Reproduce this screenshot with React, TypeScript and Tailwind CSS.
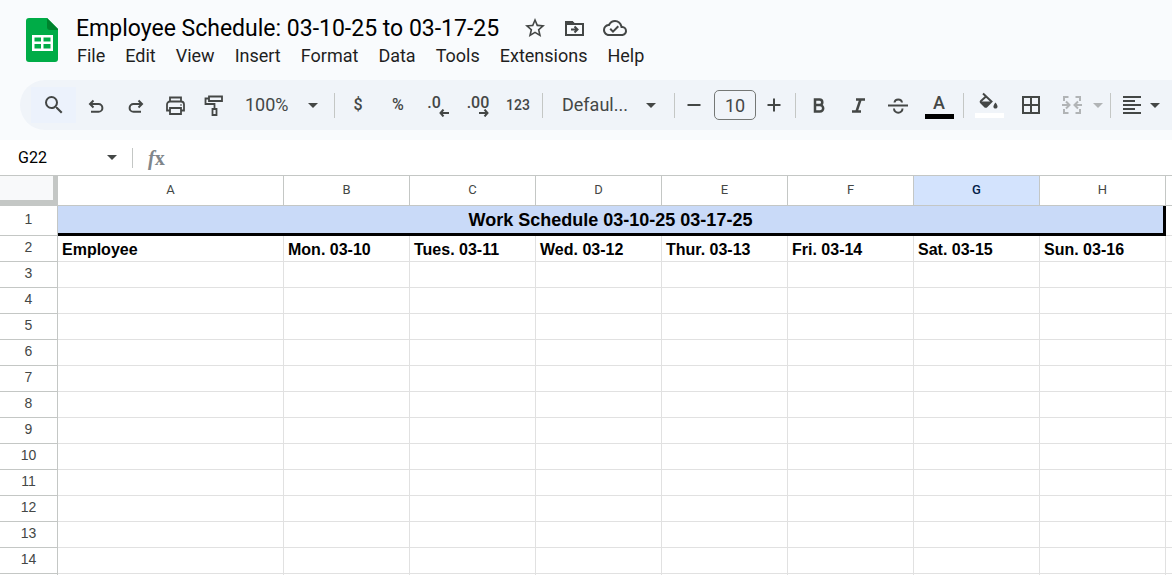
import React from "react";
import {
  MdBorderAll,
  MdFormatAlignLeft,
  MdOutlineCloudDone,
  MdSearch,
  MdStarOutline,
} from "react-icons/md";

const MENUS = ["File", "Edit", "View", "Insert", "Format", "Data", "Tools", "Extensions", "Help"];
const COLUMNS = ["A", "B", "C", "D", "E", "F", "G", "H"];
const SELECTED_COLUMN = "G";
const HEADINGS = [
  "Employee",
  "Mon. 03-10",
  "Tues. 03-11",
  "Wed. 03-12",
  "Thur. 03-13",
  "Fri. 03-14",
  "Sat. 03-15",
  "Sun. 03-16",
];
const EMPTY_ROWS = Array.from({ length: 12 }, (_, i) => i + 3);

function Caret({ className = "" }: { className?: string }) {
  return (
    <svg viewBox="0 0 10 5" className={`h-[5px] w-[10px] shrink-0 fill-current ${className}`} aria-hidden="true">
      <path d="M0 0h10L5 5z" />
    </svg>
  );
}

function Divider() {
  return <div className="ml-1 mr-[3px] h-[25px] w-px shrink-0 bg-[#c4c7c5]" />;
}

function Tool({ label, children }: { label: string; children: React.ReactNode }) {
  return (
    <button type="button" aria-label={label} className="flex h-9 w-10 shrink-0 items-center justify-center">
      {children}
    </button>
  );
}

function Stroke({ children, className = "stroke-2" }: { children: React.ReactNode; className?: string }) {
  return (
    <svg viewBox="0 0 24 24" className={`h-6 w-6 shrink-0 fill-none stroke-current ${className}`} aria-hidden="true">
      {children}
    </svg>
  );
}

function SheetsLogo() {
  return (
    <svg viewBox="0 0 32 44" className="h-11 w-8 shrink-0" aria-hidden="true">
      <path d="M3 0h18l11 11v30a3 3 0 0 1-3 3H3a3 3 0 0 1-3-3V3a3 3 0 0 1 3-3z" fill="#00ac47" />
      <path d="M21 0l11 11v1H24a3 3 0 0 1-3-3z" fill="#00832d" />
      <path
        fillRule="evenodd"
        fill="#fff"
        d="M6 17h21v16H6zM8.500 19.500v4h6.500v-4zM17.500 19.500v4h7v-4zM8.500 26v4.500h6.500V26zM17.500 26v4.500h7V26z"
      />
    </svg>
  );
}

function Toolbar() {
  return (
    <div
      role="toolbar"
      aria-label="Main"
      className="ml-5 flex h-[50px] items-center overflow-hidden rounded-l-full bg-[#f0f4f9] pl-[11px] text-[#444746]"
    >
      <button
        type="button"
        aria-label="Search the menus"
        className="flex h-9 w-[45px] shrink-0 items-center justify-center bg-[#ecf2fc]"
      >
        <MdSearch className="size-6" />
      </button>
      <Tool label="Undo">
        <Stroke>
          <path d="M9.500 7.500L6 11l3.500 3.500M6 11h8.500a3.900 3.900 0 0 1 0 7.800H7" />
        </Stroke>
      </Tool>
      <Tool label="Redo">
        <Stroke>
          <path d="M14.500 7.500L18 11l-3.500 3.500M18 11H9.500a3.900 3.900 0 0 0 0 7.800H17" />
        </Stroke>
      </Tool>
      <Tool label="Print">
        <Stroke className="stroke-[1.800px]">
          <path d="M6 8.500v-4h11v4M6 17.500H3v-6a3 3 0 0 1 3-3h11a3 3 0 0 1 3 3v6h-3M6 15h11v6H6zM16.500 12h1" />
        </Stroke>
      </Tool>
      <Tool label="Paint format">
        <Stroke className="stroke-[1.800px]">
          <path d="M5 3.500h13v4.500H5zM5 5.500H1.500v5.500h9v4.500M8.500 16h4v6h-4z" />
        </Stroke>
      </Tool>
      <div className="relative flex h-9 w-[94px] shrink-0 items-center">
        <select aria-label="Zoom" defaultValue="100%" className="w-full appearance-none bg-transparent pl-[9px] text-lg">
          <option>100%</option>
        </select>
        <Caret className="pointer-events-none absolute right-3" />
      </div>
      <Divider />
      <Tool label="Format as currency">
        <span className="text-base font-medium">$</span>
      </Tool>
      <Tool label="Format as percent">
        <span className="text-base font-medium">%</span>
      </Tool>
      <Tool label="Decrease decimal places">
        <span className="flex flex-col pt-[3px]">
          <span className="pr-2 text-base font-medium leading-3">.0</span>
          <svg viewBox="0 0 10 8" className="h-2 w-[10px] self-end fill-none stroke-current stroke-2" aria-hidden="true">
            <path d="M4.500 .5L1.500 4l3 3.500M1.500 4H10" />
          </svg>
        </span>
      </Tool>
      <Tool label="Increase decimal places">
        <span className="flex flex-col pt-[3px]">
          <span className="text-base font-medium leading-3">.00</span>
          <svg viewBox="0 0 10 8" className="h-2 w-[10px] self-end fill-none stroke-current stroke-2" aria-hidden="true">
            <path d="M5.500 .5L8.500 4l-3 3.500M8.500 4H0" />
          </svg>
        </span>
      </Tool>
      <Tool label="More formats">
        <span className="text-sm font-medium">123</span>
      </Tool>
      <Divider />
      <div className="relative flex h-9 w-[124px] shrink-0 items-center">
        <select aria-label="Font" defaultValue="Defaul..." className="w-full appearance-none bg-transparent pl-4 text-lg">
          <option>Defaul...</option>
        </select>
        <Caret className="pointer-events-none absolute right-[14px]" />
      </div>
      <Divider />
      <button
        type="button"
        aria-label="Decrease font size"
        className="flex h-9 w-8 shrink-0 items-center justify-center"
      >
        <Stroke>
          <path d="M5.500 12h13" />
        </Stroke>
      </button>
      <input
        aria-label="Font size"
        defaultValue="10"
        className="ml-1 h-[30px] w-[42px] shrink-0 rounded-[5px] border border-[#747775] bg-transparent text-center text-lg"
      />
      <button
        type="button"
        aria-label="Increase font size"
        className="flex h-9 w-[35px] shrink-0 items-center justify-center"
      >
        <Stroke>
          <path d="M5.500 12h13M12 5.500v13" />
        </Stroke>
      </button>
      <Divider />
      <Tool label="Bold">
        <Stroke className="stroke-[2.500px]">
          <path d="M8 6.500h4.500a2.800 2.800 0 0 1 0 5.600H8zM8 12.100h5a3.200 3.200 0 0 1 0 6.400H8zM8 6.500v12" />
        </Stroke>
      </Tool>
      <Tool label="Italic">
        <Stroke className="stroke-[2.500px]">
          <path d="M9 6.500h9M5 18.500h9M13.500 6.500l-4 12" />
        </Stroke>
      </Tool>
      <Tool label="Strikethrough">
        <Stroke>
          <path d="M1 12.500h20M7.500 9.500c0.500-4 7-4 7.500 0M7 15.500c0 5.500 8.500 5.500 8.500 0" />
        </Stroke>
      </Tool>
      <Tool label="Text color">
        <span className="flex flex-col items-center gap-[2px] pt-[2px]">
          <span className="text-lg font-medium leading-[18px]">A</span>
          <span className="h-[5px] w-[29px] bg-black" />
        </span>
      </Tool>
      <Divider />
      <button type="button" aria-label="Fill color" className="flex h-9 w-11 shrink-0 items-center justify-center">
        <span className="flex flex-col items-center">
          <svg viewBox="0 0 20 19" className="h-[19px] w-5" aria-hidden="true">
            <path
              d="M4 1.500L12.500 9.500L7.500 14.500a1 1 0 0 1-1.500 0L2 10.500a1 1 0 0 1 0-1.500L7.500 4"
              className="fill-none stroke-current stroke-2"
            />
            <path d="M2 9.500h10.500l-5 5.500h-2zM16.500 10.500c3 3.500 2.500 6 0 6s-3-2.500 0-6z" className="fill-current" />
          </svg>
          <span className="mt-[2px] h-[5px] w-[29px] bg-white" />
        </span>
      </button>
      <Tool label="Borders">
        <MdBorderAll className="size-6" />
      </Tool>
      <button
        type="button"
        aria-label="Merge cells"
        disabled
        className="flex h-9 w-[55px] shrink-0 items-center gap-[9px] pl-[9px] text-[#b1b4b6]"
      >
        <Stroke>
          <path d="M8.500 4H4v4M4 16v4h4.500M15.500 4H20v4M20 16v4h-4.500M2 12h7M6 8.500L9.500 12L6 15.500M22 12h-7M18 8.500L14.500 12l3.500 3.500" />
        </Stroke>
        <Caret />
      </button>
      <Divider />
      <button
        type="button"
        aria-label="Horizontal align"
        className="flex h-9 shrink-0 items-center gap-[6px] pl-[6px]"
      >
        <MdFormatAlignLeft className="size-6" />
        <Caret />
      </button>
    </div>
  );
}

function RowHeader({ n }: { n: number }) {
  return (
    <th
      scope="row"
      className="border-b border-r border-[#c4c7c5] p-0 pb-[3px] text-sm leading-4 font-normal text-[#444746] font-['Liberation_Sans',Arial,sans-serif]"
    >
      {n}
    </th>
  );
}

function Grid() {
  return (
    <table className="w-full table-fixed border-separate border-spacing-0 font-['Liberation_Sans',Arial,sans-serif]">
      <colgroup>
        <col className="w-[58px]" />
        <col className="w-[226px]" />
        {COLUMNS.slice(1).map((c) => (
          <col key={c} className="w-[126px]" />
        ))}
        <col />
      </colgroup>
      <thead>
        <tr className="h-[30px] text-[13px] leading-4 text-[#444746]">
          <td className="border-b-[6px] border-r-[5px] border-[#c4c7c5] bg-[#f8f9fa] p-0" />
          {COLUMNS.map((c) => (
            <th
              key={c}
              scope="col"
              className={
                c === SELECTED_COLUMN
                  ? "border-b border-r border-[#c4c7c5] bg-[#d3e3fd] p-0 pb-px font-medium text-[#041e49] font-['Roboto',sans-serif]"
                  : "border-b border-r border-[#c4c7c5] p-0 pb-px font-normal font-['Roboto',sans-serif]"
              }
            >
              {c}
            </th>
          ))}
          <td className="border-b border-[#c4c7c5] p-0" />
        </tr>
      </thead>
      <tbody>
        <tr className="h-[30px]">
          <RowHeader n={1} />
          <td
            colSpan={8}
            className="border-b-[3px] border-r-[3px] border-black bg-[#c9daf8] p-0 text-center text-lg leading-6 font-bold text-black"
          >
            Work Schedule 03-10-25 03-17-25
          </td>
          <td className="border-b border-[#e1e1e1] p-0" />
        </tr>
        <tr className="h-[26px]">
          <RowHeader n={2} />
          {HEADINGS.map((h) => (
            <td
              key={h}
              className="border-b border-r border-[#e1e1e1] p-0 pl-1 pt-[2px] text-base leading-5 font-bold whitespace-nowrap text-black"
            >
              {h}
            </td>
          ))}
          <td className="border-b border-[#e1e1e1] p-0" />
        </tr>
        {EMPTY_ROWS.map((n) => (
          <tr key={n} className="h-[26px]">
            <RowHeader n={n} />
            {COLUMNS.map((c) => (
              <td key={c} className="border-b border-r border-[#e1e1e1] p-0" />
            ))}
            <td className="border-b border-[#e1e1e1] p-0" />
          </tr>
        ))}
        <tr className="h-[26px]">
          <td className="border-r border-[#c4c7c5] p-0" />
          {COLUMNS.map((c) => (
            <td key={c} className="border-r border-[#e1e1e1] p-0" />
          ))}
          <td className="p-0" />
        </tr>
      </tbody>
    </table>
  );
}

export default function App() {
  return (
    <div className="h-screen overflow-hidden bg-white font-['Roboto',sans-serif] text-[#1f1f1f]">
      <header className="bg-[#f9fbfd] pb-[10px]">
        <div className="flex h-20 gap-[18px] pl-[26px] pt-[14px]">
          <div className="pt-1">
            <SheetsLogo />
          </div>
          <div>
            <div className="flex h-7 items-center text-[#444746]">
              <h1 className="mr-6 pt-[2px] text-[23px] leading-7 whitespace-nowrap text-black">
                Employee Schedule: 03-10-25 to 03-17-25
              </h1>
              <div className="flex gap-4">
                <button type="button" aria-label="Star">
                  <MdStarOutline className="size-6" />
                </button>
                <button type="button" aria-label="Move">
                  <Stroke>
                    <path d="M3 6h6l2 2h9v11H3z" />
                    <path d="M3 6h6l2 2H3z" className="fill-current" />
                    <path d="M8 13.500h6M11.500 10.500l3 3l-3 3" />
                  </Stroke>
                </button>
                <button type="button" aria-label="Document status">
                  <MdOutlineCloudDone className="size-6" />
                </button>
              </div>
            </div>
            <nav aria-label="Menus" className="flex h-7 items-center gap-5 pl-px text-lg">
              {MENUS.map((m) => (
                <button key={m} type="button">
                  {m}
                </button>
              ))}
            </nav>
          </div>
        </div>
        <Toolbar />
      </header>
      <div className="flex h-9 items-center border-b border-[#c4c7c5]">
        <input
          aria-label="Name box"
          defaultValue="G22"
          className="w-[107px] bg-transparent pl-[18px] text-base text-black"
        />
        <button type="button" aria-label="Named ranges" className="text-[#444746]">
          <Caret />
        </button>
        <div className="ml-[15px] h-5 w-px bg-[#c4c7c5]" />
        <label
          htmlFor="formula"
          className="ml-[15px] text-xl leading-6 text-[#80868b] font-['Liberation_Serif',serif]"
        >
          <i className="font-bold">f</i>
          <b>x</b>
        </label>
        <input id="formula" className="ml-3 min-w-0 flex-1 bg-transparent text-base outline-none" />
      </div>
      <Grid />
    </div>
  );
}
